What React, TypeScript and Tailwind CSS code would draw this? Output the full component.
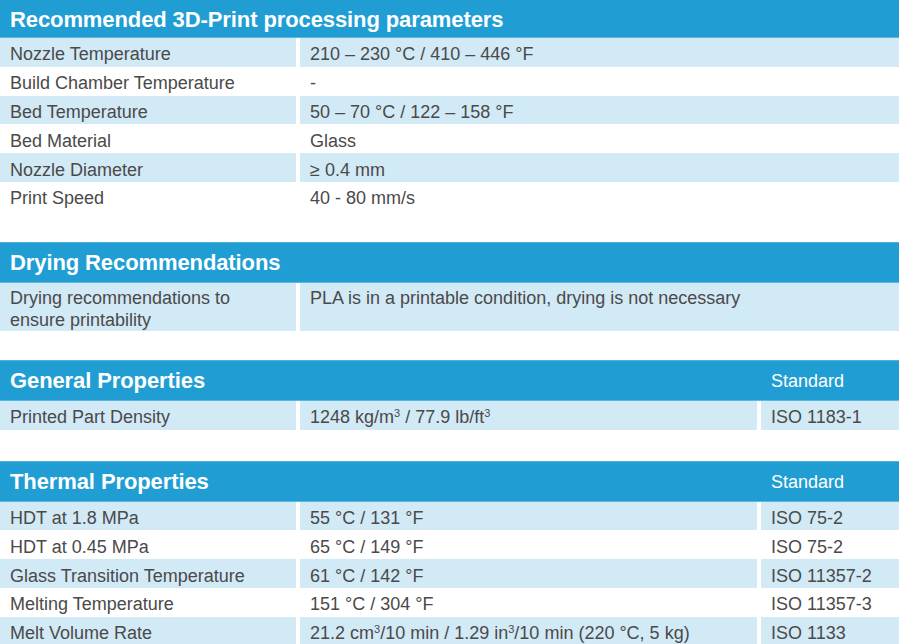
import React from "react";

const font = { fontFamily: '"Liberation Sans", Arial, Helvetica, sans-serif' };

type Row = { label: React.ReactNode; value: React.ReactNode; std?: string };

function Header({ title, standard, first }: { title: string; standard?: boolean; first?: boolean }) {
  return (
    <div
      className={`flex items-center bg-[#209ed4] text-white border-b border-[#5cb8e0] ${first ? "h-[38px]" : "h-[41px] border-t border-t-[#4fb0dc]"}`}
    >
      <div className="flex-1 pl-[10px] text-[22px] font-bold leading-none pt-[2px] tracking-[-0.1px]">{title}</div>
      {standard && <div className="w-[138px] pl-[10px] text-[18px] leading-none pt-[1px]">Standard</div>}
    </div>
  );
}

function Rows({ rows, three }: { rows: Row[]; three?: boolean }) {
  return (
    <div>
      {rows.map((r, i) => {
        const shaded = i % 2 === 0;
        const cell = `${shaded ? "bg-[#d2e9f6]" : "bg-white"} flex items-center pl-[10px] pt-[4px] whitespace-nowrap`;
        return (
          <div key={i} className="flex h-[28.8px] gap-x-[4px] text-[18px] text-[#4a4a4a] leading-none">
            <div className={`${cell} w-[296px] shrink-0`}>{r.label}</div>
            <div className={`${cell} flex-1`}>{r.value}</div>
            {three && <div className={`${cell} w-[138px] shrink-0`}>{r.std}</div>}
          </div>
        );
      })}
    </div>
  );
}

const sup = (s: string) => <sup className="text-[11px] top-[-0.6em]">{s}</sup>;

export default function App() {
  return (
    <div style={font} className="w-[899px] h-[644px] overflow-hidden bg-white">
      <Header title="Recommended 3D-Print processing parameters" first />
      <Rows
        rows={[
          { label: "Nozzle Temperature", value: "210 – 230 °C / 410 – 446 °F" },
          { label: "Build Chamber Temperature", value: "-" },
          { label: "Bed Temperature", value: "50 – 70 °C / 122 – 158 °F" },
          { label: "Bed Material", value: "Glass" },
          { label: "Nozzle Diameter", value: "≥ 0.4 mm" },
          { label: "Print Speed", value: "40 - 80 mm/s" },
        ]}
      />
      <div className="h-[31px]" />
      <Header title="Drying Recommendations" />
      <div className="flex h-[48px] gap-x-[4px] text-[18px] text-[#4a4a4a]">
        <div className="w-[296px] shrink-0 bg-[#d2e9f6] pl-[10px] pt-[4px] leading-[22px]">
          Drying recommendations to
          <br />
          ensure printability
        </div>
        <div className="flex-1 bg-[#d2e9f6] pl-[10px] pt-[4px] leading-[22px]">
          PLA is in a printable condition, drying is not necessary
        </div>
      </div>
      <div className="h-[29px]" />
      <Header title="General Properties" standard />
      <Rows
        three
        rows={[
          {
            label: "Printed Part Density",
            value: (
              <span>
                1248 kg/m{sup("3")} / 77.9 lb/ft{sup("3")}
              </span>
            ),
            std: "ISO 1183-1",
          },
        ]}
      />
      <div className="h-[31px]" />
      <Header title="Thermal Properties" standard />
      <Rows
        three
        rows={[
          { label: "HDT at 1.8 MPa", value: "55 °C / 131 °F", std: "ISO 75-2" },
          { label: "HDT at 0.45 MPa", value: "65 °C / 149 °F", std: "ISO 75-2" },
          { label: "Glass Transition Temperature", value: "61 °C / 142 °F", std: "ISO 11357-2" },
          { label: "Melting Temperature", value: "151 °C / 304 °F", std: "ISO 11357-3" },
          {
            label: "Melt Volume Rate",
            value: (
              <span>
                21.2 cm{sup("3")}/10 min / 1.29 in{sup("3")}/10 min (220 °C, 5 kg)
              </span>
            ),
            std: "ISO 1133",
          },
        ]}
      />
    </div>
  );
}
